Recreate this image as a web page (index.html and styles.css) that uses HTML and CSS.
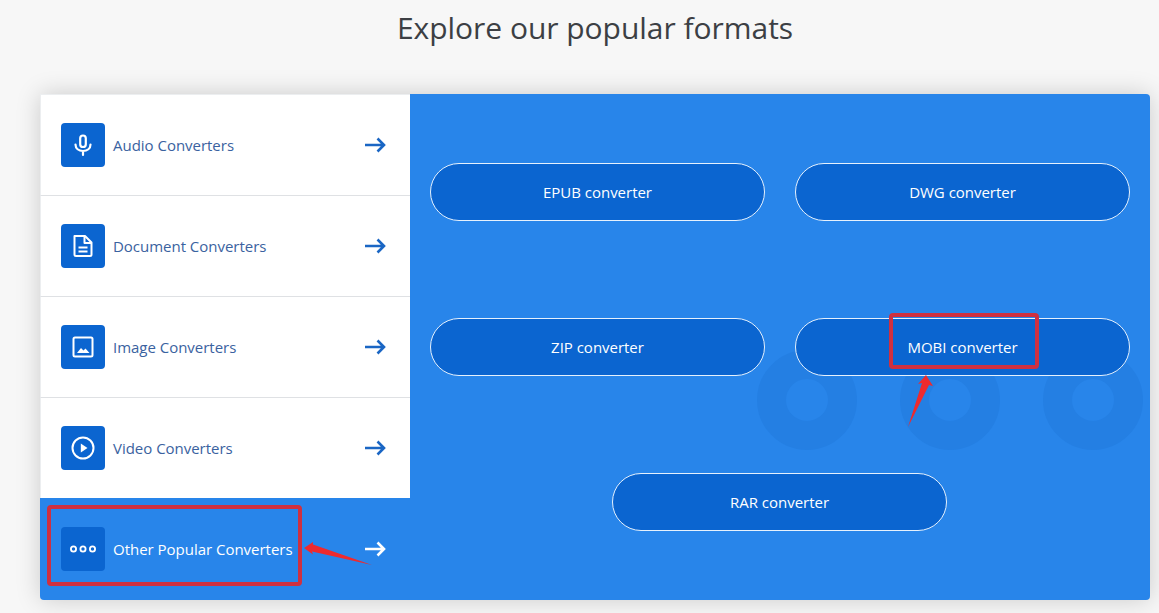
FILE: index.html
```html
<!DOCTYPE html>
<html lang="en">

<head>
    <meta charset="UTF-8">
    <meta name="viewport" content="width=device-width, initial-scale=1.0">
    <link rel="stylesheet" href="styles.css">
    <title>Popular formats</title>
</head>

<body>
    <h1 class="title">Explore our popular formats</h1>
    <div class="card">
        <ul class="menu">
            <li class="menu-item">
                <span class="menu-icon">
                    <svg viewBox="0 0 24 24" width="24" height="24" fill="none" stroke="#fff" stroke-width="2.200" stroke-linecap="round">
                        <rect x="9.200" y="2.500" width="5.600" height="11.500" rx="2.800"/>
                        <path d="M4.500 11.500c0 4 3.200 6.500 7.500 6.500s7.500-2.500 7.500-6.500M12 18v4"/>
                    </svg>
                </span>
                <span class="menu-label">Audio Converters</span>
                <svg class="arrow" viewBox="0 0 22 16" width="22" height="16"><path d="M1 8h19M13.500 1.500 20 8l-6.500 6.500"/></svg>
            </li>
            <li class="menu-item">
                <span class="menu-icon">
                    <svg viewBox="0 0 24 24" width="24" height="24" fill="none" stroke="#fff" stroke-width="2" stroke-linejoin="round">
                        <path d="M3.500 2h10.500l6.500 6.500v12a1.500 1.500 0 0 1-1.500 1.500H5a1.500 1.500 0 0 1-1.500-1.500z"/>
                        <path d="M13.500 2v7h7M7.500 13.500h9M7.500 17.500h9"/>
                    </svg>
                </span>
                <span class="menu-label">Document Converters</span>
                <svg class="arrow" viewBox="0 0 22 16" width="22" height="16"><path d="M1 8h19M13.500 1.500 20 8l-6.500 6.500"/></svg>
            </li>
            <li class="menu-item">
                <span class="menu-icon">
                    <svg viewBox="0 0 24 24" width="24" height="24" fill="none" stroke="#fff" stroke-width="2">
                        <rect x="2.500" y="2.500" width="19" height="19" rx="1.500"/>
                        <path d="M6 18l4-5 2.500 2.500 2-2L18.500 18z" fill="#fff" stroke="none"/>
                    </svg>
                </span>
                <span class="menu-label">Image Converters</span>
                <svg class="arrow" viewBox="0 0 22 16" width="22" height="16"><path d="M1 8h19M13.500 1.500 20 8l-6.500 6.500"/></svg>
            </li>
            <li class="menu-item">
                <span class="menu-icon">
                    <svg viewBox="0 0 24 24" width="24" height="24" fill="none" stroke="#fff" stroke-width="2">
                        <circle cx="12" cy="12" r="10.500"/>
                        <path d="M9.800 7.500v9l6.700-4.500z" fill="#fff" stroke="none"/>
                    </svg>
                </span>
                <span class="menu-label">Video Converters</span>
                <svg class="arrow" viewBox="0 0 22 16" width="22" height="16"><path d="M1 8h19M13.500 1.500 20 8l-6.500 6.500"/></svg>
            </li>
            <li class="menu-item active">
                <span class="menu-icon">
                    <svg viewBox="0 0 28 24" width="28" height="24" fill="none" stroke="#fff" stroke-width="1.800">
                        <circle cx="4.500" cy="12" r="2.600"/>
                        <circle cx="14" cy="12" r="2.600"/>
                        <circle cx="23.500" cy="12" r="2.600"/>
                    </svg>
                </span>
                <span class="menu-label">Other Popular Converters</span>
                <svg class="arrow" viewBox="0 0 22 16" width="22" height="16"><path d="M1 8h19M13.500 1.500 20 8l-6.500 6.500"/></svg>
            </li>
        </ul>
        <div class="formats">
            <div class="rings">
                <span class="ring"></span>
                <span class="ring"></span>
                <span class="ring"></span>
            </div>
            <a class="format-btn">EPUB converter</a>
            <a class="format-btn">DWG converter</a>
            <a class="format-btn">ZIP converter</a>
            <a class="format-btn">MOBI converter</a>
            <a class="format-btn">RAR converter</a>
        </div>

        <!-- red annotations drawn on top of the screenshot -->
        <div class="mark mark-other"></div>
        <div class="mark mark-mobi"></div>
        <svg class="pointers" viewBox="0 0 1110 506" width="1110" height="506">
            <path d="M264 454 273 448 273 450.500 332 471 272 457.500 273 460.500z"/>
            <path d="M886 281 893 292 889 291 868 333 882 289 878 290z"/>
        </svg>
    </div>
</body>

</html>
```

FILE: styles.css
```css
:root {
    --font: 'Open Sans', sans-serif;
    --background: #f7f7f7;
    --panel: #2885ea;
    --dark: #0b65d0;
    --text: #3c3f44;
    --label: #3a62a0;
    --mark: #cf3040;
}

* {
    box-sizing: border-box;
}

body {
    margin: 0;
    height: 613px;
    overflow: hidden;
    background-color: var(--background);
    font-family: var(--font);
}

.title {
    margin: 0;
    height: 94px;
    padding: 8px 9px 0 40px;
    text-align: center;
    font-size: 30px;
    line-height: 40px;
    font-weight: 400;
    letter-spacing: -0.03px;
    color: var(--text);
}

.card {
    position: relative;
    display: flex;
    width: 1110px;
    height: 506px;
    margin-left: 40px;
    border-radius: 4px;
    background-color: var(--panel);
    box-shadow: 0 0 24px rgba(0, 0, 0, 0.18);
}

.menu {
    flex: 0 0 370px;
    margin: 0;
    padding: 0;
    list-style: none;
}

.menu-item {
    display: flex;
    align-items: center;
    height: 101px;
    padding: 0 24px 0 20px;
    border-top: 1px solid #dfe1e4;
    border-left: 1px solid #eceef0;
    background-color: #fff;
    color: var(--label);
    font-size: 15px;
    letter-spacing: -0.02px;
}

.menu-item:first-child {
    border-top-color: #eceef0;
}

.menu-item.active {
    height: 102px;
    padding-left: 21px;
    border: 0;
    background-color: transparent;
    color: #fff;
}

.menu-icon {
    display: flex;
    align-items: center;
    justify-content: center;
    flex: 0 0 44px;
    height: 44px;
    margin-right: 8px;
    border-radius: 4px;
    background-color: var(--dark);
}

.menu-label {
    flex: 1;
}

.arrow {
    fill: none;
    stroke: #1a66c4;
    stroke-width: 2.600;
}

.active .arrow {
    stroke: #fff;
}

.formats {
    position: relative;
    flex: 1;
    display: flex;
    flex-wrap: wrap;
    justify-content: center;
    align-content: flex-start;
    gap: 97px 30px;
    padding: 69px 20px;
}

.format-btn {
    position: relative;
    display: flex;
    align-items: center;
    justify-content: center;
    width: 335px;
    height: 58px;
    border: 1px solid #e6f1fd;
    border-radius: 29px;
    background-color: var(--dark);
    color: #fff;
    font-size: 15px;
    letter-spacing: -0.02px;
}

.format-btn:last-child {
    margin-left: -1px;
}

.rings {
    position: absolute;
    top: 256px;
    left: 347px;
    display: flex;
    gap: 43px;
}

.ring {
    width: 100px;
    height: 100px;
    border: 29px solid #247fe3;
    border-radius: 50%;
}

.mark {
    position: absolute;
    border: 4px solid var(--mark);
    border-radius: 4px;
}

.mark-other {
    top: 411px;
    left: 7px;
    width: 255px;
    height: 81px;
}

.mark-mobi {
    top: 219px;
    left: 849px;
    width: 150px;
    height: 56px;
}

.pointers {
    position: absolute;
    top: 0;
    left: 0;
    fill: #ee2a2e;
}
```
